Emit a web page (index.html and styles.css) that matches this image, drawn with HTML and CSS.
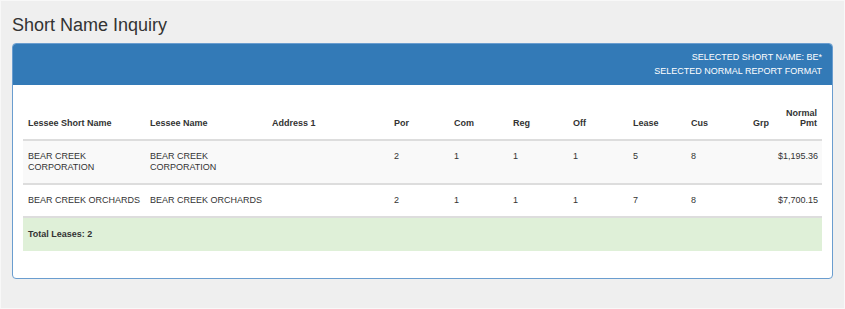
FILE: index.html
```html
<!DOCTYPE html>
<html lang="en">
<head>
    <meta charset="UTF-8">
    <meta name="viewport" content="width=device-width, initial-scale=1">
    <title>Short Name Inquiry</title>
    <link rel="stylesheet" href="styles.css">
</head>
<body>
    <div class="page">
        <h1 class="page-title">Short Name Inquiry</h1>
        <div class="panel">
            <div class="panel-heading">
                <div>SELECTED SHORT NAME: BE*</div>
                <div>SELECTED NORMAL REPORT FORMAT</div>
            </div>
            <div class="panel-body">
                <table class="report">
                    <colgroup>
                        <col class="c-name">
                        <col class="c-name">
                        <col class="c-name">
                        <col class="c-num">
                        <col class="c-num-s">
                        <col class="c-num">
                        <col class="c-num">
                        <col class="c-lease">
                        <col class="c-cus">
                        <col class="c-grp">
                        <col class="c-pmt">
                    </colgroup>
                    <thead>
                        <tr>
                            <th>Lessee Short Name</th>
                            <th>Lessee Name</th>
                            <th>Address 1</th>
                            <th>Por</th>
                            <th>Com</th>
                            <th>Reg</th>
                            <th>Off</th>
                            <th>Lease</th>
                            <th>Cus</th>
                            <th>Grp</th>
                            <th class="right">Normal<br>Pmt</th>
                        </tr>
                    </thead>
                    <tbody>
                        <tr class="striped">
                            <td>BEAR CREEK<br>CORPORATION</td>
                            <td>BEAR CREEK<br>CORPORATION</td>
                            <td></td>
                            <td>2</td>
                            <td>1</td>
                            <td>1</td>
                            <td>1</td>
                            <td>5</td>
                            <td>8</td>
                            <td></td>
                            <td class="right">$1,195.36</td>
                        </tr>
                        <tr>
                            <td>BEAR CREEK ORCHARDS</td>
                            <td>BEAR CREEK ORCHARDS</td>
                            <td></td>
                            <td>2</td>
                            <td>1</td>
                            <td>1</td>
                            <td>1</td>
                            <td>7</td>
                            <td>8</td>
                            <td></td>
                            <td class="right">$7,700.15</td>
                        </tr>
                        <tr class="total">
                            <td colspan="11">Total Leases: 2</td>
                        </tr>
                    </tbody>
                </table>
            </div>
        </div>
    </div>
</body>
</html>
```

FILE: styles.css
```css
html, body {
    margin: 0;
    padding: 0;
}
body {
    background: #efefef;
    font-family: "Liberation Sans", Arial, sans-serif;
    color: #333;
}
.page {
    min-height: 100vh;
    box-sizing: border-box;
    border: 1px solid #f8f8f8;
    padding: 14px 11px;
}
.page-title {
    font-size: 18px;
    font-weight: normal;
    line-height: 20px;
    margin: 0 0 8px 0;
}
.panel {
    background: #fff;
    border: 1px solid #6a9dcf;
    border-radius: 4px;
    overflow: hidden;
}
.panel-heading {
    background: #337ab7;
    border-bottom: 1px solid #337ab7;
    color: #fff;
    font-size: 9px;
    line-height: 14px;
    text-align: right;
    padding: 6px 10px 6px;
}
.panel-body {
    padding: 12px 10px 27px;
}
.report {
    width: 100%;
    table-layout: fixed;
    border-collapse: collapse;
    font-size: 9px;
}
.c-name { width: 122px; }
.c-num { width: 60px; }
.c-num-s { width: 59px; }
.c-lease { width: 58px; }
.c-cus { width: 62px; }
.c-grp { width: 25px; }
.c-pmt { width: 49px; }
.report th {
    font-weight: bold;
    text-align: left;
    vertical-align: bottom;
    line-height: 10px;
    padding: 11px 5px;
    border-bottom: 2px solid #ddd;
}
.report td {
    vertical-align: top;
    line-height: 11px;
    padding: 10px 5px;
    border-bottom: 2px solid #ddd;
    white-space: nowrap;
}
.report .right {
    text-align: right;
}
.report tr.striped td {
    background: #f9f9f9;
}
.report tr.total td {
    background: #dff0d8;
    font-weight: bold;
    padding: 11px 5px;
    border-bottom: none;
}
```
